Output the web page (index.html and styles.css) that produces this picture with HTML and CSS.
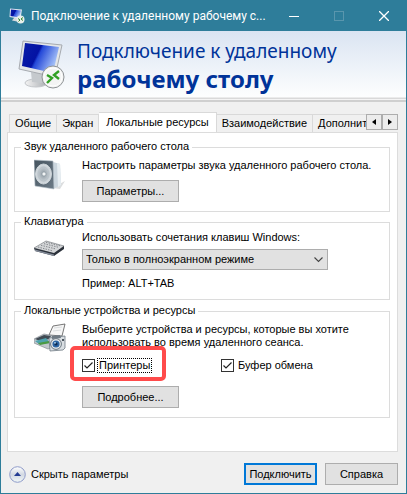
FILE: index.html
```html
<!doctype html>
<html lang="ru">
<head>
    <meta charset="utf-8">
    <meta name="viewport" content="width=device-width, initial-scale=1.0">
    <title>Подключение к удаленному рабочему столу</title>
    <link rel="stylesheet" href="styles.css">
</head>

<body>
    <!-- общая иконка: монитор и значок подключения -->
    <svg class="defs" width="0" height="0" aria-hidden="true">
        <defs>
            <linearGradient id="screenFill" x1="0" y1="0" x2="1" y2="0.4">
                <stop offset="0" stop-color="#0a1ea8"/>
                <stop offset="0.48" stop-color="#0312a4"/>
                <stop offset="0.54" stop-color="#2448d8"/>
                <stop offset="1" stop-color="#a4c0f8"/>
            </linearGradient>
            <linearGradient id="standFill" x1="0" y1="0" x2="1" y2="0">
                <stop offset="0" stop-color="#f4f4f4"/>
                <stop offset="1" stop-color="#a9adb2"/>
            </linearGradient>
            <linearGradient id="steelFill" x1="0" y1="0" x2="1" y2="1">
                <stop offset="0" stop-color="#46545f"/>
                <stop offset="1" stop-color="#6c7b87"/>
            </linearGradient>
            <radialGradient id="coneFill">
                <stop offset="0" stop-color="#f7f9fa"/>
                <stop offset="0.2" stop-color="#9ba6ae"/>
                <stop offset="1" stop-color="#dbe1e5"/>
            </radialGradient>
            <symbol id="remote" viewBox="0 0 48 50">
                <ellipse cx="19" cy="43" rx="11" ry="4" fill="url(#standFill)" stroke="#c3c6ca"/>
                <path d="M14 32 L27 34 L25 43 L15 42 Z" fill="#c5c9cd"/>
                <path d="M6 1 L45 5 L38 37 L2 29 Z" fill="#e4e6e8" stroke="#a6aab0"/>
                <path d="M8 3 L42 7 L36 33 L5 26 Z" fill="url(#screenFill)"/>
                <circle cx="36" cy="37" r="11" fill="#f3f4f4" stroke="#8f9396"/>
                <circle cx="36" cy="37" r="9" fill="none" stroke="#ffffff"/>
                <path d="M30 35 L35 38 L30 43 M42 31 L37 35 L42 39" fill="none" stroke="#31a024" stroke-width="2.4"/>
            </symbol>
        </defs>
    </svg>

    <div class="window">
        <header class="titlebar">
            <svg class="title-icon" viewBox="0 0 16 16" aria-hidden="true">
                <path d="M1 0.5 L13 1.5 L11.5 11 L0.5 9 Z" fill="#dfe5ee"/>
                <path d="M2 1.5 L12 2.5 L10.5 9.5 L1.5 8 Z" fill="url(#screenFill)"/>
                <path d="M3 12.5 L8 13.5 L8 10 L5 10 Z" fill="#d5d8dc"/>
                <circle cx="11.5" cy="11.5" r="4" fill="#e8eeea"/>
                <path d="M9 10.5 L11 12 L9.5 13.5 M14 9.5 L12 11 L14 12.5" fill="none" stroke="#36862c"/>
            </svg>
            <span class="title-text">Подключение к удаленному рабочему с...</span>
            <div class="window-buttons">
                <button class="win-button" aria-label="Свернуть">
                    <svg width="10" height="10" viewBox="0 0 10 10"><path d="M0 5.5 H10" stroke="#fff"/></svg>
                </button>
                <button class="win-button" aria-label="Развернуть" disabled>
                    <svg width="10" height="10" viewBox="0 0 10 10"><rect x="0.5" y="0.5" width="9" height="9" fill="none" stroke="#5996ad"/></svg>
                </button>
                <button class="win-button" aria-label="Закрыть">
                    <svg width="10" height="10" viewBox="0 0 10 10"><path d="M0 0 L10 10 M10 0 L0 10" stroke="#fff" stroke-width="1.3"/></svg>
                </button>
            </div>
        </header>

        <div class="banner">
            <svg class="banner-icon" aria-hidden="true"><use href="#remote"/></svg>
            <h1>Подключение к удаленному <strong>рабочему столу</strong></h1>
        </div>

        <main class="content">
            <div class="tabs">
                <div class="tab-list" role="tablist">
                    <button class="tab" role="tab">Общие</button>
                    <button class="tab" role="tab">Экран</button>
                    <button class="tab active" role="tab" aria-selected="true">Локальные ресурсы</button>
                    <button class="tab" role="tab">Взаимодействие</button>
                    <button class="tab" role="tab">Дополнительно</button>
                </div>
                <div class="tab-scroll">
                    <button aria-label="Назад"><svg width="4" height="6" viewBox="0 0 4 6"><path d="M4 0 V6 L0 3 Z"/></svg></button>
                    <button aria-label="Вперед"><svg width="4" height="6" viewBox="0 0 4 6"><path d="M0 0 V6 L4 3 Z"/></svg></button>
                </div>
            </div>

            <div class="panel" role="tabpanel">
                <fieldset class="group sound">
                    <legend>Звук удаленного рабочего стола</legend>
                    <svg class="group-icon" viewBox="0 0 32 32" aria-hidden="true">
                        <path d="M18 29 L31 22 L26 30 Z" fill="#dcdedf"/>
                        <path d="M19 3 L26 5 L27 26 L19 30 Z" fill="#cbd6de"/>
                        <path d="M23 4 L26 5 L27 26 L24 28 Z" fill="#e7eef2"/>
                        <path d="M0 1 L19 2 L20 30 L1 27 Z" fill="url(#steelFill)" stroke="#b9c4cc" stroke-width="0.6"/>
                        <ellipse cx="9.5" cy="15" rx="8" ry="10" fill="url(#coneFill)" stroke="#c9d1d6"/>
                        <ellipse cx="9.5" cy="15" rx="5.5" ry="7" fill="none" stroke="#b5bec5" stroke-width="0.7"/>
                        <circle cx="10" cy="15" r="2" fill="#f1f4f5" stroke="#87939c" stroke-width="0.6"/>
                    </svg>
                    <div class="group-body">
                        <p>Настроить параметры звука удаленного рабочего стола.</p>
                        <button class="btn wide">Параметры...</button>
                    </div>
                </fieldset>

                <fieldset class="group keyboard">
                    <legend>Клавиатура</legend>
                    <svg class="group-icon" viewBox="0 0 32 32" aria-hidden="true">
                        <path d="M0 17 L12 10 L30 15 L20 23 Z" fill="#d4d6d8" stroke="#7b7f84" stroke-width="0.7"/>
                        <path d="M0 17 L20 22 L30 15 L30 18 L20 25 L1 20 Z" fill="#2c323b"/>
                        <path d="M1 20 L20 25 L20 23.5 L1 18.5 Z" fill="#858d9a"/>
                        <path d="M4 16 L19 20 M7 14.3 L22 18 M10 12.7 L25 16.4 M12 11.3 L27 15" stroke="#6d7176" stroke-width="0.8" stroke-dasharray="1.4 1.2"/>
                    </svg>
                    <div class="group-body">
                        <label for="keys">Использовать сочетания клавиш Windows:</label>
                        <div class="select-box">
                            <select id="keys">
                                <option>На этом компьютере</option>
                                <option>На удаленном компьютере</option>
                                <option selected>Только в полноэкранном режиме</option>
                            </select>
                            <svg class="chevron" width="9" height="6" viewBox="0 0 9 6" aria-hidden="true"><path d="M0.5 0.5 L4.5 4.5 L8.5 0.5" fill="none" stroke="#444" stroke-width="1.1"/></svg>
                        </div>
                        <p>Пример: ALT+TAB</p>
                    </div>
                </fieldset>

                <fieldset class="group devices">
                    <legend>Локальные устройства и ресурсы</legend>
                    <svg class="group-icon" viewBox="0 0 32 32" aria-hidden="true">
                        <path d="M19 3 L31 1 L28 13 L15 12 Z" fill="#f6f6f6" stroke="#555" stroke-width="0.8"/>
                        <path d="M20 5 L28 4 M19 8 L27 7" stroke="#cfd2d4" stroke-width="0.7"/>
                        <path d="M0 16 L10 11 L20 13 L20 24 L14 26 L0 20 Z" fill="#c2c8cd" stroke="#858d93" stroke-width="0.7"/>
                        <path d="M1 16 L10 12 L17 13 L15 16 L6 18 Z" fill="#414b54"/>
                        <path d="M1 18 L12 15 L16 20 L5 21 Z" fill="#4fa3ae"/>
                        <path d="M4 20 L15 18 L16 20 L6 22 Z" fill="#4b9b43"/>
                        <path d="M15 15 L31 13 L31 25 L29 27 L16 28 Z" fill="#d9dee2" stroke="#6f7a83" stroke-width="0.8"/>
                        <path d="M18 13 L26 12 L27 15 L18 16 Z" fill="#6e7a84"/>
                        <circle cx="22" cy="21" r="5.4" fill="#e8ebed" stroke="#68757f"/>
                        <circle cx="22" cy="21" r="3.6" fill="#2b65a4"/>
                        <circle cx="22" cy="21" r="1.6" fill="#0f2c52"/>
                        <circle cx="21" cy="19.8" r="0.9" fill="#b9dcf5"/>
                        <rect x="28" y="16" width="2" height="2" fill="#4b565f"/>
                    </svg>
                    <div class="group-body">
                        <p class="hint">Выберите устройства и ресурсы, которые вы хотите использовать во время удаленного сеанса.</p>
                        <div class="checks">
                            <div class="check highlighted">
                                <input type="checkbox" id="printers" checked>
                                <label class="focused" for="printers">Принтеры</label>
                            </div>
                            <div class="check">
                                <input type="checkbox" id="clipboard" checked>
                                <label for="clipboard">Буфер обмена</label>
                            </div>
                        </div>
                        <button class="btn wide">Подробнее...</button>
                    </div>
                </fieldset>
            </div>
        </main>

        <footer class="actions">
            <button class="toggle">
                <svg width="17" height="17" viewBox="0 0 17 17" aria-hidden="true">
                    <defs>
                        <linearGradient id="roundFill" x1="0" y1="0" x2="0" y2="1">
                            <stop offset="0" stop-color="#ffffff"/>
                            <stop offset="0.5" stop-color="#d3d9e2"/>
                            <stop offset="1" stop-color="#f2f8f8"/>
                        </linearGradient>
                    </defs>
                    <circle cx="8.5" cy="8.5" r="7.8" fill="url(#roundFill)" stroke="#8f9bc9"/>
                    <path d="M5 10 L8.5 6 L12 10 Z" fill="#233c92"/>
                </svg>
                <span>Скрыть параметры</span>
            </button>
            <button class="btn default">Подключить</button>
            <button class="btn">Справка</button>
        </footer>
    </div>
</body>
</html>
```

FILE: styles.css
```css
* {
    box-sizing: border-box;
}
body {
    margin: 0;
    font-family: "Liberation Sans", Arial, sans-serif;
    font-size: 11px;
    line-height: 13px;
    color: #000;
}
button, select, input {
    font: inherit;
    color: inherit;
    margin: 0;
}
button {
    padding: 0;
}
p {
    margin: 0;
}
svg {
    display: block;
    flex: none;
}
.defs {
    position: absolute;
}
.window {
    display: flex;
    flex-direction: column;
    min-height: 100vh;
    background-color: #f0f0f0;
    border: 1px solid #2e7d9a;
}

/* заголовок окна */
.titlebar {
    display: flex;
    align-items: center;
    height: 30px;
    padding-left: 8px;
    background-color: #2e7d9a;
    color: #fff;
    font-family: Roboto, "Noto Sans", sans-serif;
    font-size: 12px;
}
.title-icon {
    width: 16px;
    height: 16px;
}
.title-text {
    flex: 1;
    min-width: 0;
    margin-left: 6px;
    line-height: 18px;
    white-space: nowrap;
}
.window-buttons {
    display: flex;
}
.win-button {
    display: flex;
    align-items: center;
    justify-content: center;
    width: 45px;
    height: 30px;
    border: none;
    background: none;
}

/* шапка */
.banner {
    display: flex;
    align-items: center;
    height: 71px;
    padding: 0 16px 3px;
    background: linear-gradient(#dae4f2, #fdfefe 66px, #d9d9d9 67px, #d9d9d9 68px, #f4f4f4 68px, #f4f4f4 69px, #cfcfcf 69px);
}
.banner-icon {
    width: 48px;
    height: 50px;
}
h1 {
    margin: 0 0 0 12px;
    color: #003399;
    font-family: "Noto Sans", Tahoma, sans-serif;
    font-size: 19px;
    font-weight: normal;
    line-height: 27px;
}
h1 strong {
    display: block;
    font-size: 24px;
}

/* вкладки */
.content {
    flex: 1;
    display: flex;
    flex-direction: column;
    padding: 10px 8px 0 6px;
}
.tabs {
    display: flex;
    align-items: flex-end;
    padding-left: 2px;
}
.tab-list {
    display: flex;
    flex: 1;
    align-items: flex-end;
    min-width: 0;
    overflow: hidden;
}
.tab {
    flex: none;
    height: 18px;
    padding: 0 5px;
    border: 1px solid #d9d9d9;
    border-width: 1px 1px 0 0;
    background-color: #f0f0f0;
}
.tab:first-child {
    border-left-width: 1px;
}
.tab.active {
    height: 20px;
    padding: 0 7px;
    background-color: #fff;
}
.tab-scroll {
    display: flex;
    align-self: center;
}
.tab-scroll button {
    display: flex;
    align-items: center;
    justify-content: center;
    width: 16px;
    height: 16px;
    border: 1px solid #adadad;
    background-color: #ececec;
}
.panel {
    flex: 1;
    padding: 7px 7px 33px 6px;
    border: 1px solid #dcdcdc;
    background-color: #fff;
}

/* группы */
.group {
    display: flex;
    gap: 16px;
    min-width: 0;
    margin: 0 0 3px;
    padding: 5px 10px 9px 19px;
    border: 1px solid #dcdcdc;
}
.group.keyboard {
    padding-top: 2px;
    margin-bottom: 4px;
}
.group:last-child {
    margin-bottom: 0;
}
.group legend {
    height: 14px;
    margin-left: -13px;
    padding: 0 3px;
}
.group-icon {
    width: 32px;
    height: 32px;
}
.group-body {
    flex: 1;
    min-width: 0;
}
.group-body label {
    display: block;
}
.hint {
    max-width: 280px;
}
.btn {
    width: 73px;
    height: 22px;
    border: 1px solid #adadad;
    background-color: #e1e1e1;
}
.btn.wide {
    display: block;
    width: 97px;
    margin-top: 8px;
}
.btn.default {
    border: 2px solid #0078d7;
}
.select-box {
    position: relative;
    max-width: 246px;
    margin: 5px 0 7px;
}
.select-box select {
    display: block;
    width: 100%;
    height: 21px;
    padding: 0 20px 0 3px;
    border: 1px solid #adadad;
    border-radius: 0;
    background-color: #e1e1e1;
    appearance: none;
}
.chevron {
    position: absolute;
    top: 8px;
    right: 5px;
    pointer-events: none;
}
.checks {
    display: grid;
    grid-template-columns: 139px 1fr;
    margin: 9px 0 13px;
}
.check {
    position: relative;
    display: flex;
    align-items: center;
    gap: 2px;
}
.check input {
    width: 13px;
    height: 13px;
    border: 1px solid #333;
    background: #fff url("data:image/svg+xml,%3Csvg xmlns='http://www.w3.org/2000/svg' viewBox='0 0 11 11'%3E%3Cpath d='M1.5 5.5 L4 8 L9.5 2.5' fill='none' stroke='%23222' stroke-width='1.2'/%3E%3C/svg%3E");
    appearance: none;
}
.check label {
    padding: 0 1px;
    border: 1px solid transparent;
}
.check .focused {
    border: 1px dotted #000;
}
.highlighted::after {
    content: "";
    position: absolute;
    top: -12px;
    bottom: -8px;
    left: -12px;
    width: 88px;
    border: 4px solid #ff4b4b;
    border-radius: 5px;
    pointer-events: none;
}

/* нижняя панель */
.actions {
    display: flex;
    align-items: center;
    gap: 8px;
    padding: 11px 8px 8px;
}
.toggle {
    display: flex;
    align-items: center;
    gap: 5px;
    margin-right: auto;
    border: none;
    background: none;
}
```
